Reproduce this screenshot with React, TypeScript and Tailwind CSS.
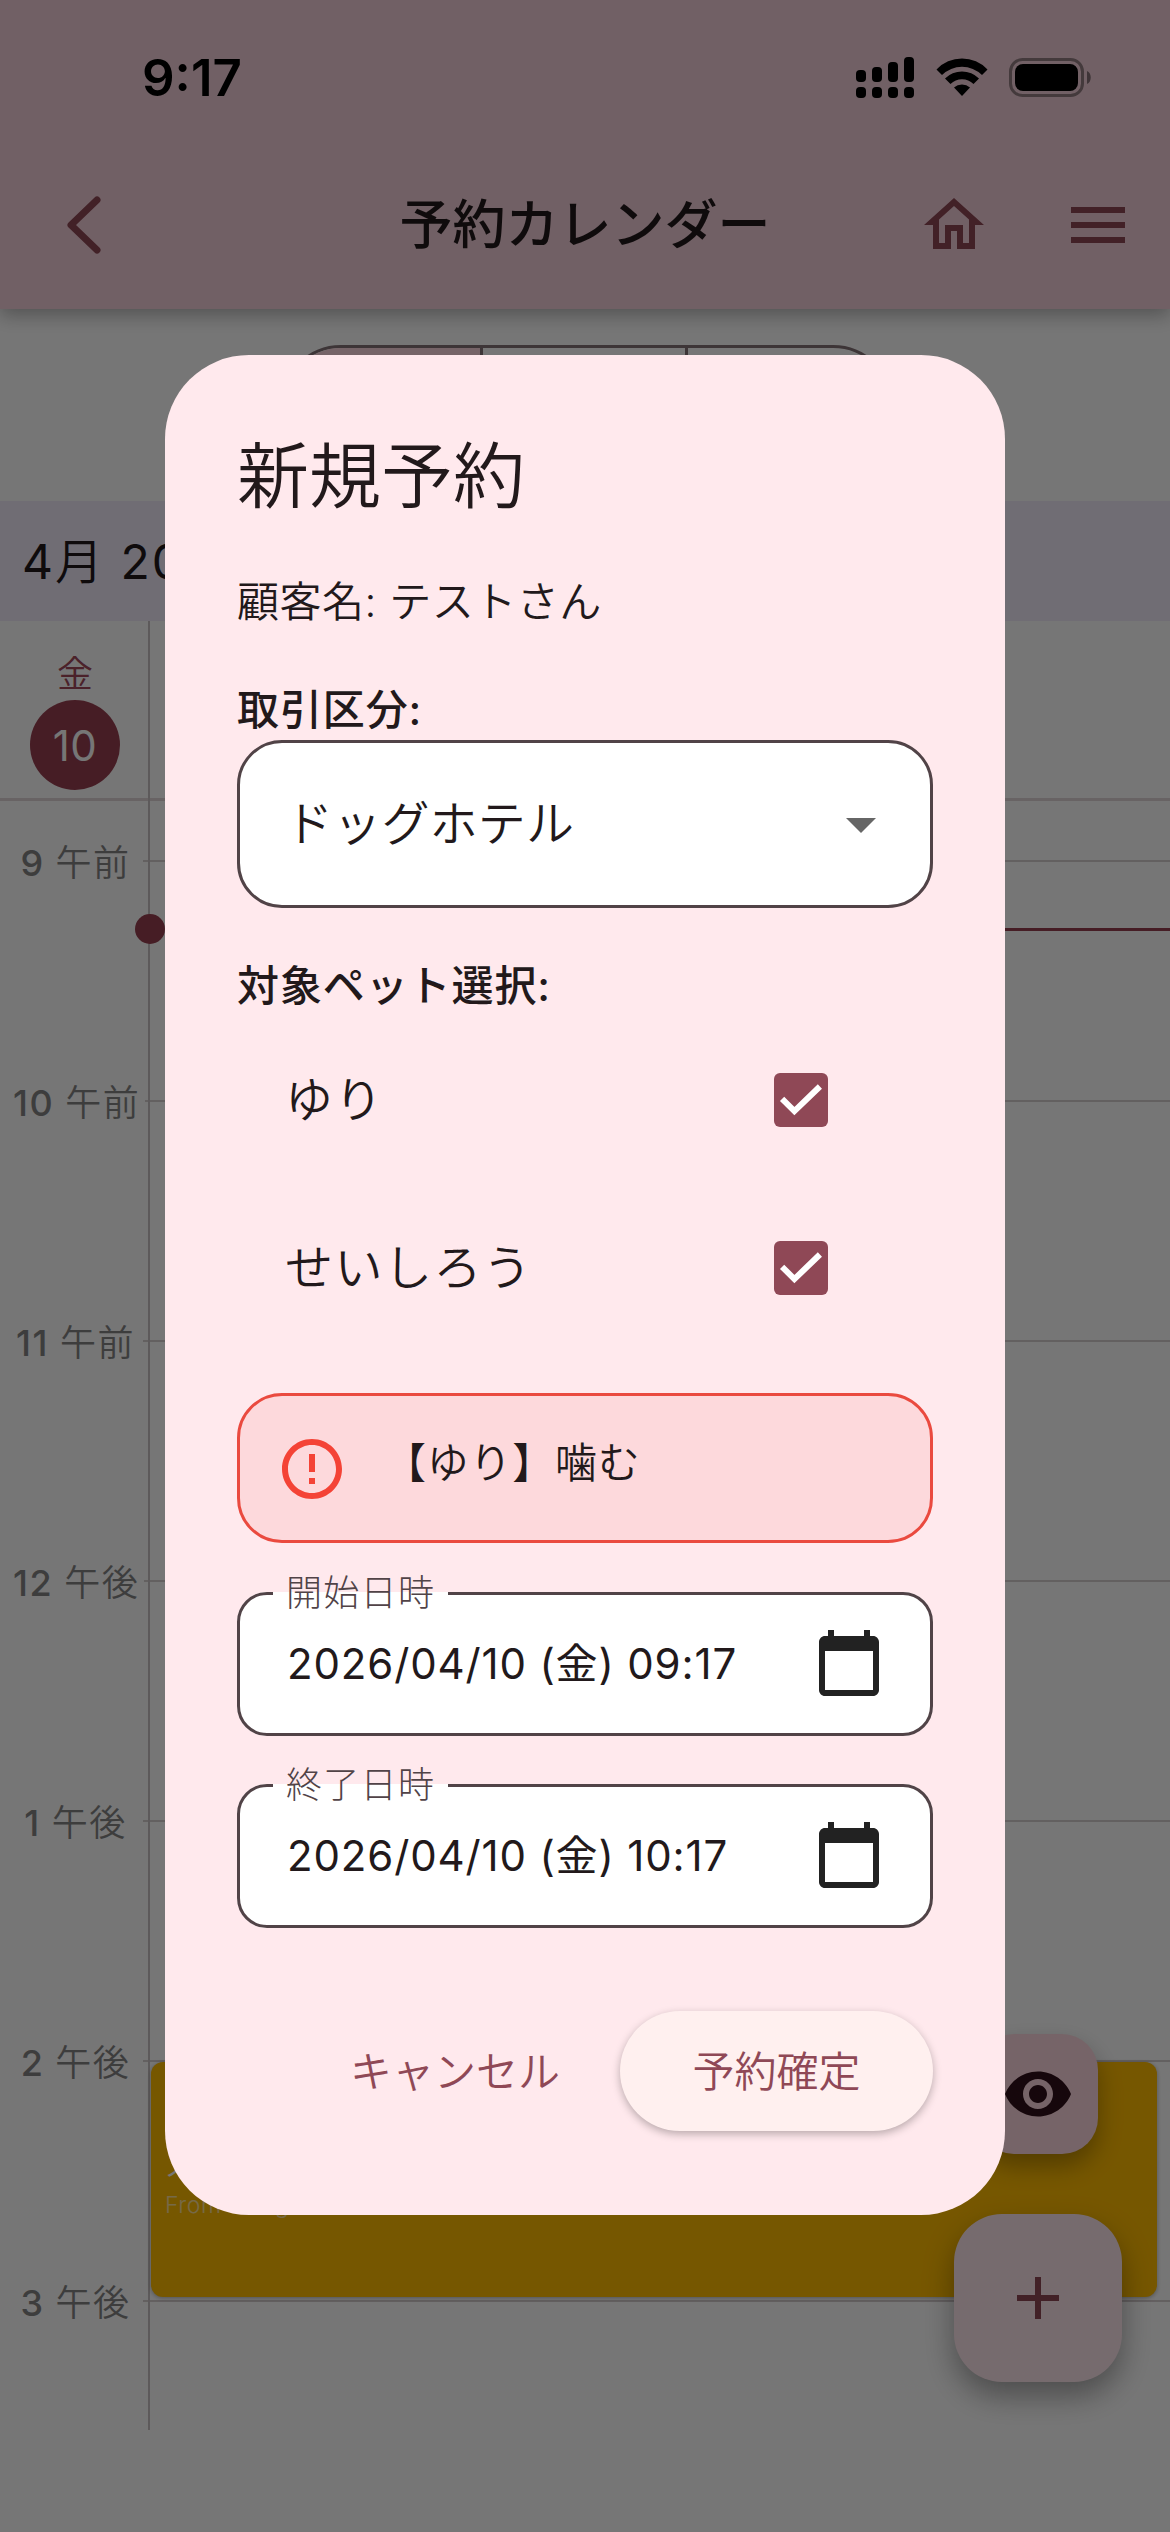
import clsx from "clsx";

const hours = [
  { hour: 9, period: "午前" },
  { hour: 10, period: "午前" },
  { hour: 11, period: "午前" },
  { hour: 12, period: "午後" },
  { hour: 1, period: "午後" },
  { hour: 2, period: "午後" },
  { hour: 3, period: "午後" },
];

const pets = ["ゆり", "せいしろう"];

interface IconProps {
  path: string;
  className?: string;
}

const Icon = ({ path, className }: IconProps) => (
  <svg viewBox="0 0 24 24" fill="currentColor" className={clsx("size-[72px] shrink-0", className)}>
    <path d={path} />
  </svg>
);

const icons = {
  home: "M12 5.69l5 4.5V18h-2v-6H9v6H7v-7.81l5-4.5M12 3L2 12h3v8h6v-6h2v6h6v-8h3L12 3z",
  menu: "M3 18h18v-2H3v2zm0-5h18v-2H3v2zm0-7v2h18V6H3z",
  arrowDown: "M7 10l5 5 5-5z",
  error:
    "M11 15h2v2h-2zm0-8h2v6h-2zm.99-5C6.47 2 2 6.48 2 12s4.47 10 9.99 10C17.52 22 22 17.52 22 12S17.52 2 11.99 2zM12 20c-4.42 0-8-3.58-8-8s3.58-8 8-8 8 3.58 8 8-3.58 8-8 8z",
  calendar:
    "M20 3h-1V1h-2v2H7V1H5v2H4c-1.1 0-2 .9-2 2v16c0 1.1.9 2 2 2h16c1.1 0 2-.9 2-2V5c0-1.1-.9-2-2-2zm0 18H4V8h16v13z",
  eye: "M12 4.5C7 4.5 2.73 7.61 1 12c1.73 4.39 6 7.5 11 7.5s9.27-3.11 11-7.5c-1.73-4.39-6-7.5-11-7.5zM12 17c-2.76 0-5-2.24-5-5s2.24-5 5-5 5 2.24 5 5-2.24 5-5 5zm0-8c-1.66 0-3 1.34-3 3s1.34 3 3 3 3-1.34 3-3-1.34-3-3-3z",
  add: "M19 13h-6v6h-2v-6H5v-2h6V5h2v6h6v2z",
};

const StatusBar = () => (
  <div className="flex h-[141px] items-start justify-between pr-[78px] pl-[142px] text-black">
    <span className="mt-[47px] text-[51px] leading-[62px] font-semibold">9:17</span>
    <svg width="236" height="42" viewBox="0 0 236 42" className="mt-[57px]">
      <rect x="0" y="13" width="10" height="12" rx="4" />
      <rect x="16" y="10" width="10" height="15" rx="4" />
      <rect x="32" y="5" width="10" height="20" rx="4" />
      <rect x="48" y="0" width="10" height="25" rx="4" />
      <rect x="0" y="30" width="10" height="11" rx="4" />
      <rect x="16" y="30" width="10" height="11" rx="4" />
      <rect x="32" y="30" width="10" height="11" rx="4" />
      <rect x="48" y="30" width="10" height="11" rx="4" />
      <path d="M80.500 12.500A35 35 0 0 1 131.500 12.500L126 18A28.500 28.500 0 0 0 86 18Z" />
      <path d="M89 21.500A24 24 0 0 1 123 21.500L117.500 27A16.500 16.500 0 0 0 94.500 27Z" />
      <path d="M98 30.500A12 12 0 0 1 114 30.500L106 39Z" />
      <rect x="154.500" y="2.500" width="72" height="36" rx="12" fill="none" stroke="#000" strokeOpacity="0.4" strokeWidth="3" />
      <rect x="159" y="7" width="63" height="27" rx="8" />
      <path d="M231 14c5 2 5 11 0 13z" fillOpacity="0.45" />
    </svg>
  </div>
);

const AppBar = () => (
  <header className="h-[309px] bg-[#f5d0da] text-[#8f4856] shadow-[0_6px_18px_rgba(0,0,0,0.3)]">
    <StatusBar />
    <div className="flex h-[168px] items-center">
      <div className="flex w-[252px] shrink-0 pl-[66px]">
        <svg width="36" height="60" viewBox="0 0 36 60" fill="none" stroke="currentColor" strokeWidth="7" strokeLinecap="round" strokeLinejoin="round">
          <path d="M31 5L5 30L31 55" />
        </svg>
      </div>
      <h1 className="flex-1 text-center text-[53px] leading-[72px] font-medium text-[#22191b]">予約カレンダー</h1>
      <div className="flex w-[252px] shrink-0 gap-[72px]">
        <Icon path={icons.home} />
        <Icon path={icons.menu} />
      </div>
    </div>
  </header>
);

const Calendar = () => (
  <main className="relative h-[2223px] bg-white">
    <div className="flex h-[192px] justify-center pt-9 pl-1">
      <div className="flex h-[120px] w-[612px] overflow-hidden rounded-full border-[3px] border-[#847377]">
        <div className="w-[199px] border-r-[3px] border-[#847377] bg-[#ffd9e0]" />
        <div className="w-[205px] border-r-[3px] border-[#847377]" />
        <div className="flex-1" />
      </div>
    </div>
    <div className="flex h-[120px] items-center bg-[#f1ebfb] pt-[2px] pl-[22px] text-[48px] tracking-[2px] text-[#22191b]">
      4<span className="font-[350]">月</span>&nbsp;2026
    </div>
    <div className="flex h-[180px] w-full border-b-[3px] border-[#e0d6d8]">
      <div className="flex w-[150px] flex-col items-center pt-[30px]">
        <span className="text-[36px] leading-[46px] font-[350] text-[#a34a5b]">金</span>
        <span className="mt-[3px] flex size-[90px] items-center justify-center rounded-full bg-[#983f50] text-[42px] tracking-[0.5px] text-white">
          10
        </span>
      </div>
    </div>
    <div className="pt-[40px]">
      {hours.map(({ hour, period }) => (
        <div key={hour} className="flex h-[240px] items-start">
          <div className="flex h-10 w-full items-center">
            <div className="flex min-w-[143px] shrink-0 items-center justify-center gap-[11px] pt-1 pr-[5px] pl-[13px] text-[36px] tracking-[1.5px] text-[#858585]">
              <span className="font-medium">{hour}</span>
              <span className="font-[350]">{period}</span>
            </div>
            <div className="h-[2px] flex-1 bg-[#d6cfd0]" />
          </div>
        </div>
      ))}
    </div>
    {/* day column divider */}
    <div className="absolute top-[312px] left-[148px] h-[1809px] w-[1.5px] bg-[#c9c3c4]" />
    {/* current time */}
    <div className="absolute top-[605px] left-[135px] flex w-[1035px] items-center">
      <div className="size-[30px] rounded-full bg-[#983f50]" />
      <div className="h-[3px] flex-1 bg-[#983f50]" />
    </div>
    <div className="absolute top-[1753px] left-[151px] flex h-[235px] w-[1006px] flex-col rounded-[12px] bg-[#ffbc00] pt-[86px] pl-[14px] text-white shadow-[0_1px_4px_rgba(0,0,0,0.3)]">
      <span className="text-[27px] leading-[38px]">スタッフ</span>
      <span className="text-[23px] leading-[38px] font-light tracking-[0.6px] opacity-60">From Google</span>
    </div>
    <button className="absolute top-[1725px] left-[978px] flex size-[120px] items-center justify-center rounded-[36px] bg-[#ffd9e0] text-[#31101a] shadow-[0_12px_24px_rgba(0,0,0,0.3)]">
      <Icon path={icons.eye} />
    </button>
    <button className="absolute top-[1905px] left-[954px] flex size-[168px] items-center justify-center rounded-[48px] bg-[#ffe7ee] text-[#8f4856] shadow-[0_14px_30px_rgba(0,0,0,0.35)]">
      <Icon path={icons.add} />
    </button>
  </main>
);

const PetRow = ({ name }: { name: string }) => (
  <div className="flex h-[168px] items-center justify-between pr-[105px] pl-12 text-[48px] tracking-[1.5px]">
    {name}
    <span className="flex size-[54px] rounded-[6px] bg-[#8f4856]">
      <svg viewBox="0 0 18 18" fill="none" stroke="#fff" strokeWidth="2" className="size-full">
        <path d="M2.700 8.600L6.800 12.700L15.300 4.500" />
      </svg>
    </span>
  </div>
);

interface DateFieldProps {
  label: string;
  value: string;
  className?: string;
}

const DateField = ({ label, value, className }: DateFieldProps) => (
  <fieldset className={clsx("h-[161px] rounded-[30px] border-[3px] border-[#514347] bg-white", className)}>
    <legend className="ml-[33px] h-9 px-[13px] text-[36px] leading-9 font-light tracking-[1.3px] text-[#514347]">
      {label}
    </legend>
    <div className="-mt-[17px] flex h-[138px] items-center justify-between pr-[45px] pl-[47px]">
      <span className="text-[42px] font-normal tracking-[0.85px]">{value}</span>
      <Icon path={icons.calendar} className="text-[#222]" />
    </div>
  </fieldset>
);

const ReservationDialog = () => (
  <div className="h-[1860px] w-[840px] rounded-[84px] bg-[#ffe9ed] px-[72px] pt-[73px] font-[350] text-[#22191b]">
    <h2 className="text-[72px] leading-[96px]">新規予約</h2>
    <p className="mt-12 text-[42px] leading-[60px] tracking-[0.5px]">顧客名: テストさん</p>
    <p className="mt-12 text-[42px] leading-[60px] font-medium tracking-[0.9px]">取引区分:</p>
    <div className="flex h-[168px] items-center justify-between rounded-[45px] border-[3px] border-[#514347] bg-white pr-[33px] pl-[45px] text-[48px] tracking-[0.2px]">
      ドッグホテル
      <Icon path={icons.arrowDown} className="text-[#666]" />
    </div>
    <p className="mt-12 text-[42px] leading-[60px] font-medium tracking-[0.9px]">対象ペット選択:</p>
    <div>
      {pets.map((pet) => (
        <PetRow key={pet} name={pet} />
      ))}
    </div>
    <div className="mt-[41px] flex h-[150px] rounded-[45px] border-[3px] border-[#ea4a3f] bg-[#fdd9dc] pl-9">
      <Icon path={icons.error} className="mt-[37px] text-[#f44336]" />
      <p className="mt-[37px] ml-9 text-[42px] leading-[60px] tracking-[0.75px]">【ゆり】噛む</p>
    </div>
    <DateField label="開始日時" value="2026/04/10 (金) 09:17" className="mt-8" />
    <DateField label="終了日時" value="2026/04/10 (金) 10:17" className="mt-[31px]" />
    <div className="mt-[83px] flex items-center justify-end text-[42px] text-[#8f4856]">
      <button className="px-[60px]">キャンセル</button>
      <button className="h-[120px] w-[313px] rounded-full bg-[#fff0ef] shadow-[0_3px_8px_rgba(0,0,0,0.28)]">予約確定</button>
    </div>
  </div>
);

export default function App() {
  return (
    <div className="relative h-[2532px] w-[1170px] overflow-hidden font-['Inter','Noto_Sans_CJK_JP',sans-serif]">
      <div className="flex h-full flex-col">
        <div className="relative z-10">
          <AppBar />
        </div>
        <Calendar />
      </div>
      <div className="absolute inset-0 z-20 flex items-start justify-center bg-black/[0.538] pt-[355px]">
        <ReservationDialog />
      </div>
    </div>
  );
}
